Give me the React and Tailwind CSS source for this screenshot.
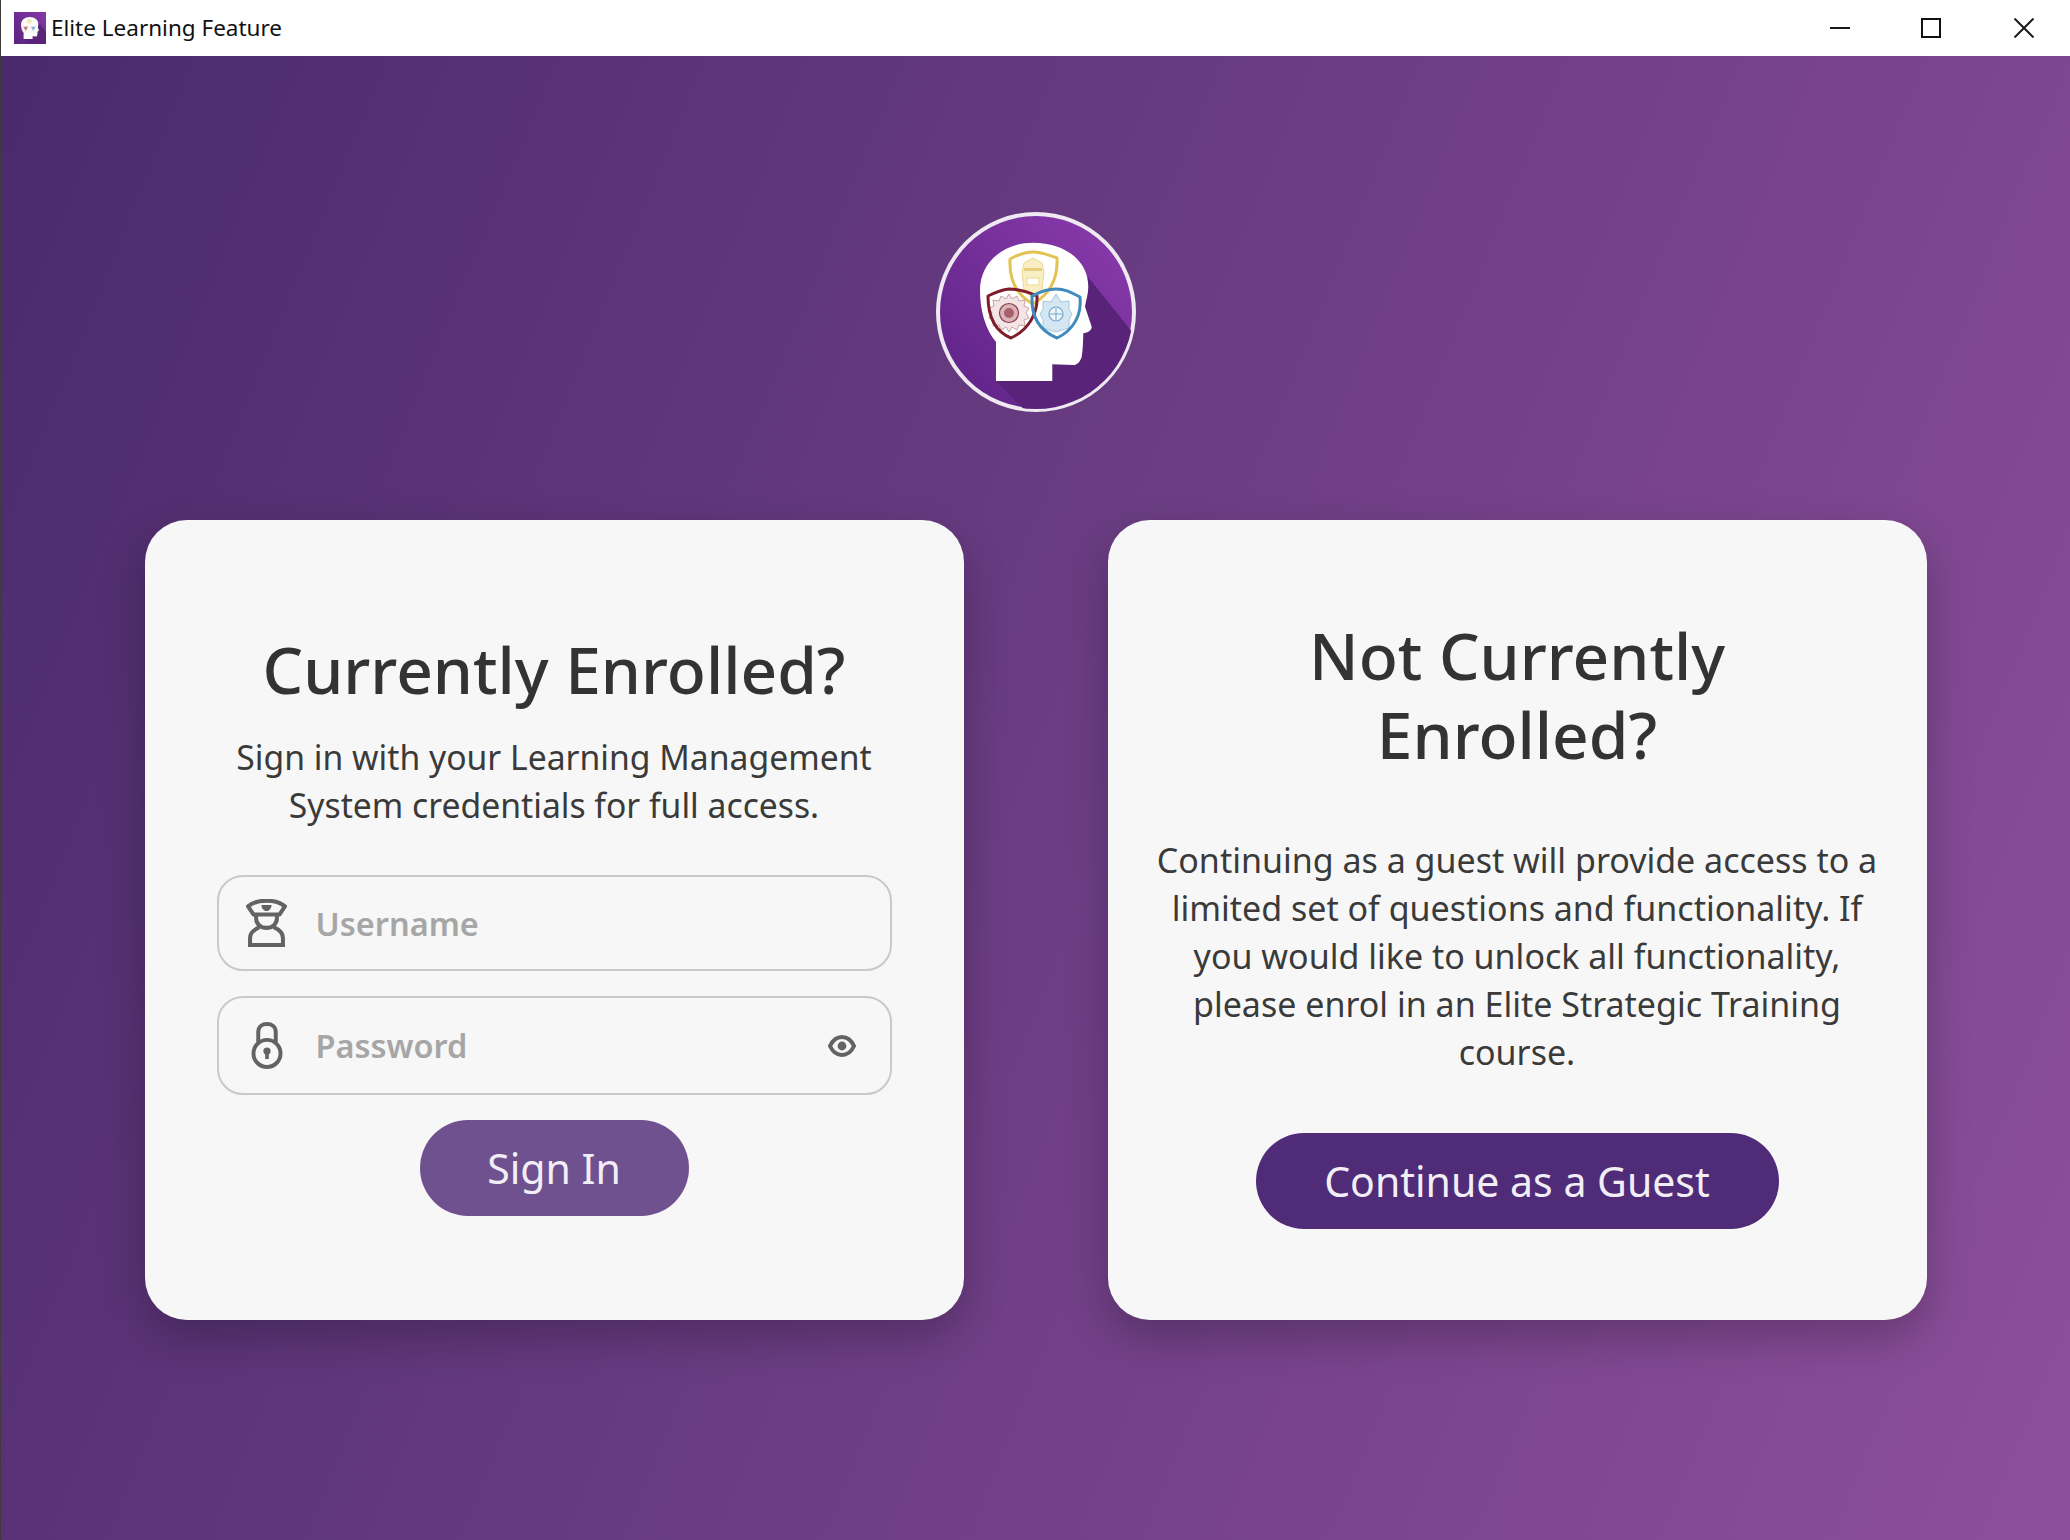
import { useState } from "react";

const FONT = "[font-family:'Noto_Sans','Open_Sans',sans-serif]";

// head silhouette shared by the big logo and the title bar icon
const HEAD =
  "M60 169V130C50 118 44 100 44 78C44 50 68 30.7 97.3 30.7C128 30.7 152.3 48 152.3 74.7C152.3 82 150 88 149 94.7L155.7 114.7C156 118 152 121 147.3 121.3C147 130 147 137 145.7 144.7C144 150 141 153 137.3 153L116.3 152.3V169Z";

function Shield({ d, color }) {
  return <path d={d} fill="none" stroke={color} strokeWidth="3" strokeLinejoin="round" />;
}

function Logo() {
  return (
    <svg viewBox="0 0 200 200" className="h-[200px] w-[200px]">
      <defs>
        <linearGradient id="disc" x1="0.85" y1="0.15" x2="0.1" y2="0.85">
          <stop offset="0" stopColor="#8538a8" />
          <stop offset="1" stopColor="#62258a" />
        </linearGradient>
        <clipPath id="round">
          <circle cx="100" cy="100" r="97" />
        </clipPath>
      </defs>
      <circle cx="100" cy="100" r="98" fill="url(#disc)" stroke="#efeaf2" strokeWidth="4" />
      <g clipPath="url(#round)">
        <path d="M152 65L230 162V230H120L60 169Z" fill="#592379" />
      </g>
      <path d={HEAD} fill="#fff" />

      {/* yellow badge */}
      <path d="M97 46L106 51L108 60L106 78L97 86L88 78L86 60L88 51Z" fill="#f8edc3" stroke="#ecd98f" strokeWidth="1" />
      <rect x="88" y="56" width="18" height="3" fill="#e6cf7d" />
      <rect x="91" y="66" width="12" height="7" fill="#fff" stroke="#ecd98f" />
      <Shield d="M97 40C86 40 80 44 74 47C73 66 79 82 97 92C114 82 122 66 121 46C112 43 106 40 97 40Z" color="#e3c452" />

      {/* red badge */}
      <polygon
        points="73,82 76,87 81,84 83,89 89,88 88,94 93,96 90,101 93,106 88,108 89,114 83,113 81,118 76,115 73,120 70,115 65,118 63,113 57,114 58,108 53,106 56,101 53,96 58,94 57,88 63,89 65,84 70,87"
        fill="#f3e4e6"
        stroke="#bd8f96"
        strokeWidth="0.8"
      />
      <circle cx="73" cy="101" r="9.5" fill="#d9b4b9" stroke="#8f3d49" strokeWidth="1.2" />
      <circle cx="73" cy="101" r="5" fill="#a5606b" />
      <Shield d="M73 77C64 78 58 81 52 84C52 104 58 119 75 126C92 118 102 102 101 84C92 80 84 77 73 77Z" color="#7f1d2a" />

      {/* blue badge */}
      <polygon
        points="120,82 125,90 133,89 133,97 136,102 133,108 133,116 120,120 107,116 107,108 104,102 107,97 107,89 115,90"
        fill="#d5e6f3"
        stroke="#93bcdc"
        strokeWidth="0.8"
      />
      <circle cx="120" cy="102" r="7" fill="#f0f6fb" stroke="#6aa5cf" strokeWidth="1.2" />
      <path d="M120 96V108M114 102H126" stroke="#6aa5cf" strokeWidth="1" />
      <Shield d="M120 77C109 77 102 81 96 84C95 104 102 118 121 126C138 118 146 102 144 85C136 81 130 77 120 77Z" color="#3f8bbd" />
    </svg>
  );
}

function TitleIcon() {
  return (
    <svg viewBox="0 0 200 200" className="h-8 w-8 shrink-0">
      <defs>
        <linearGradient id="square" x1="1" y1="0" x2="0" y2="1">
          <stop offset="0" stopColor="#8538a8" />
          <stop offset="1" stopColor="#5a2380" />
        </linearGradient>
      </defs>
      <rect width="200" height="200" fill="url(#square)" />
      <path d="M152 65L200 125V200H95L60 169Z" fill="#592379" />
      <path d={HEAD} fill="#fdfbf7" />
      <circle cx="97" cy="58" r="15" fill="#f3e6b4" />
      <path d="M56 90H90L73 122Z" fill="#d9a3aa" />
      <path d="M103 90H138L120 122Z" fill="#a9cce6" />
      <circle cx="73" cy="100" r="6" fill="#a8545f" />
      <circle cx="120" cy="100" r="6" fill="#6da6d0" />
    </svg>
  );
}

function OfficerIcon() {
  return (
    <svg viewBox="0 0 122 143" className="h-12 w-[41px]" fill="none" stroke="#636363" strokeWidth="12">
      <path d="M6 22C22 8 40 5 61 5C82 5 100 8 116 22L100 46H22Z" strokeLinejoin="round" />
      <path d="M46 18H76C76 30 67 36 61 36C55 36 46 30 46 18Z" fill="#636363" stroke="none" />
      <path d="M30 46V58C30 74 44 86 61 86C78 86 92 74 92 58V46" />
      <path d="M12 138V116C12 100 26 90 40 84M110 138V116C110 100 96 90 82 84M6 137H116" />
    </svg>
  );
}

function LockIcon() {
  return (
    <svg viewBox="0 0 97 142" className="h-[47px] w-8" fill="none" stroke="#636363" strokeWidth="12">
      <circle cx="48.5" cy="95" r="41" />
      <path d="M22 62V30C22 14 34 6 48.5 6C63 6 75 14 75 30V62" />
      <circle cx="48.5" cy="88" r="11" fill="#636363" stroke="none" />
      <rect x="43" y="90" width="11" height="22" fill="#636363" stroke="none" />
    </svg>
  );
}

function EyeIcon() {
  return (
    <svg viewBox="0 0 28 24" className="h-6 w-7" fill="none" stroke="#636363" strokeWidth="4">
      <path d="M2 12C5 5.5 9 3 14 3C19 3 23 5.5 26 12C23 18.5 19 21 14 21C9 21 5 18.5 2 12Z" />
      <circle cx="14" cy="12" r="4.4" fill="#636363" stroke="none" />
    </svg>
  );
}

function WindowControls() {
  return (
    <div className="flex items-center gap-[71px] pr-9">
      <svg viewBox="0 0 20 20" className="h-5 w-5" stroke="#1a1a1a" strokeWidth="2">
        <path d="M0 10H20" />
      </svg>
      <svg viewBox="0 0 20 20" className="mr-[2px] h-5 w-5" fill="none" stroke="#111" strokeWidth="2">
        <rect x="1" y="1" width="18" height="18" />
      </svg>
      <svg viewBox="0 0 20 20" className="h-5 w-5" stroke="#1a1a1a" strokeWidth="2">
        <path d="M0.5 0.5L19.5 19.5M19.5 0.5L0.5 19.5" />
      </svg>
    </div>
  );
}

function Field({ icon, placeholder, type, height, children }) {
  return (
    <div className={`flex w-full items-center rounded-[26px] border-2 border-[#c9c9c9] pl-[23px] pr-6 ${height}`}>
      <div className="flex w-12 shrink-0 justify-center pl-[2px]">{icon}</div>
      <input
        type={type}
        placeholder={placeholder}
        className="ml-[26px] min-w-0 flex-1 bg-transparent pt-[2px] text-[32.5px] font-semibold text-[#333] outline-none placeholder:text-[#a6a6a6]"
      />
      {children}
    </div>
  );
}

export default function App() {
  const [showPassword, setShowPassword] = useState(false);

  return (
    <div className={`flex h-[1540px] w-[2070px] flex-col overflow-hidden border-l border-[#3c3c3c] ${FONT}`}>
      {/* 타이틀 바 */}
      <div className="flex h-14 shrink-0 items-center justify-between bg-white pl-[13px]">
        <div className="flex items-center gap-[5px]">
          <TitleIcon />
          <span className="text-[22.5px] text-[#111]">Elite Learning Feature</span>
        </div>
        <WindowControls />
      </div>

      <main className="flex flex-1 flex-col items-center bg-[linear-gradient(112deg,#4a2a6b,#8d4f9b)] pt-[156px]">
        <Logo />

        <div className="mt-[108px] flex gap-[144px]">
          {/* 로그인 카드 */}
          <section className="flex h-[800px] w-[819px] flex-col items-center justify-center rounded-[42px] bg-[#f7f7f7] px-[72px] pt-[6px] shadow-[0_18px_44px_rgba(0,0,0,0.24)]">
            <h1 className="text-[64px] leading-[79px] font-medium text-[#333]">Currently Enrolled?</h1>
            <p className="mt-[24px] text-center text-[33.7px] leading-[48px] text-[#3a3a3a]">
              Sign in with your Learning Management
              <br />
              System credentials for full access.
            </p>
            <div className="mt-[46px] flex w-full flex-col gap-[25px]">
              <Field icon={<OfficerIcon />} placeholder="Username" type="text" height="h-[96px]" />
              <Field
                icon={<LockIcon />}
                placeholder="Password"
                type={showPassword ? "text" : "password"}
                height="h-[99px]"
              >
                <button type="button" onClick={() => setShowPassword(!showPassword)} className="mr-[10px]">
                  <EyeIcon />
                </button>
              </Field>
            </div>
            <button className="mt-[25px] h-[96px] w-[269px] rounded-full bg-[#6f5190] pt-[2px] text-[41px] text-[#f2eef6]">
              Sign In
            </button>
          </section>

          {/* 게스트 카드 */}
          <section className="flex h-[800px] w-[819px] flex-col items-center justify-center rounded-[42px] bg-[#f7f7f7] px-10 pt-[4px] shadow-[0_18px_44px_rgba(0,0,0,0.24)]">
            <h1 className="text-center text-[64px] leading-[79px] font-medium text-[#333]">
              Not Currently
              <br />
              Enrolled?
            </h1>
            <p className="mt-[62px] text-center text-[34px] leading-[48px] text-[#3a3a3a]">
              Continuing as a guest will provide access to a
              <br />
              limited set of questions and functionality. If
              <br />
              you would like to unlock all functionality,
              <br />
              please enrol in an Elite Strategic Training
              <br />
              course.
            </p>
            <button className="mt-[57px] h-[96px] w-[523px] rounded-full bg-[#4f2b78] pt-[3px] text-[41px] text-[#f2eef6]">
              Continue as a Guest
            </button>
          </section>
        </div>
      </main>
    </div>
  );
}
